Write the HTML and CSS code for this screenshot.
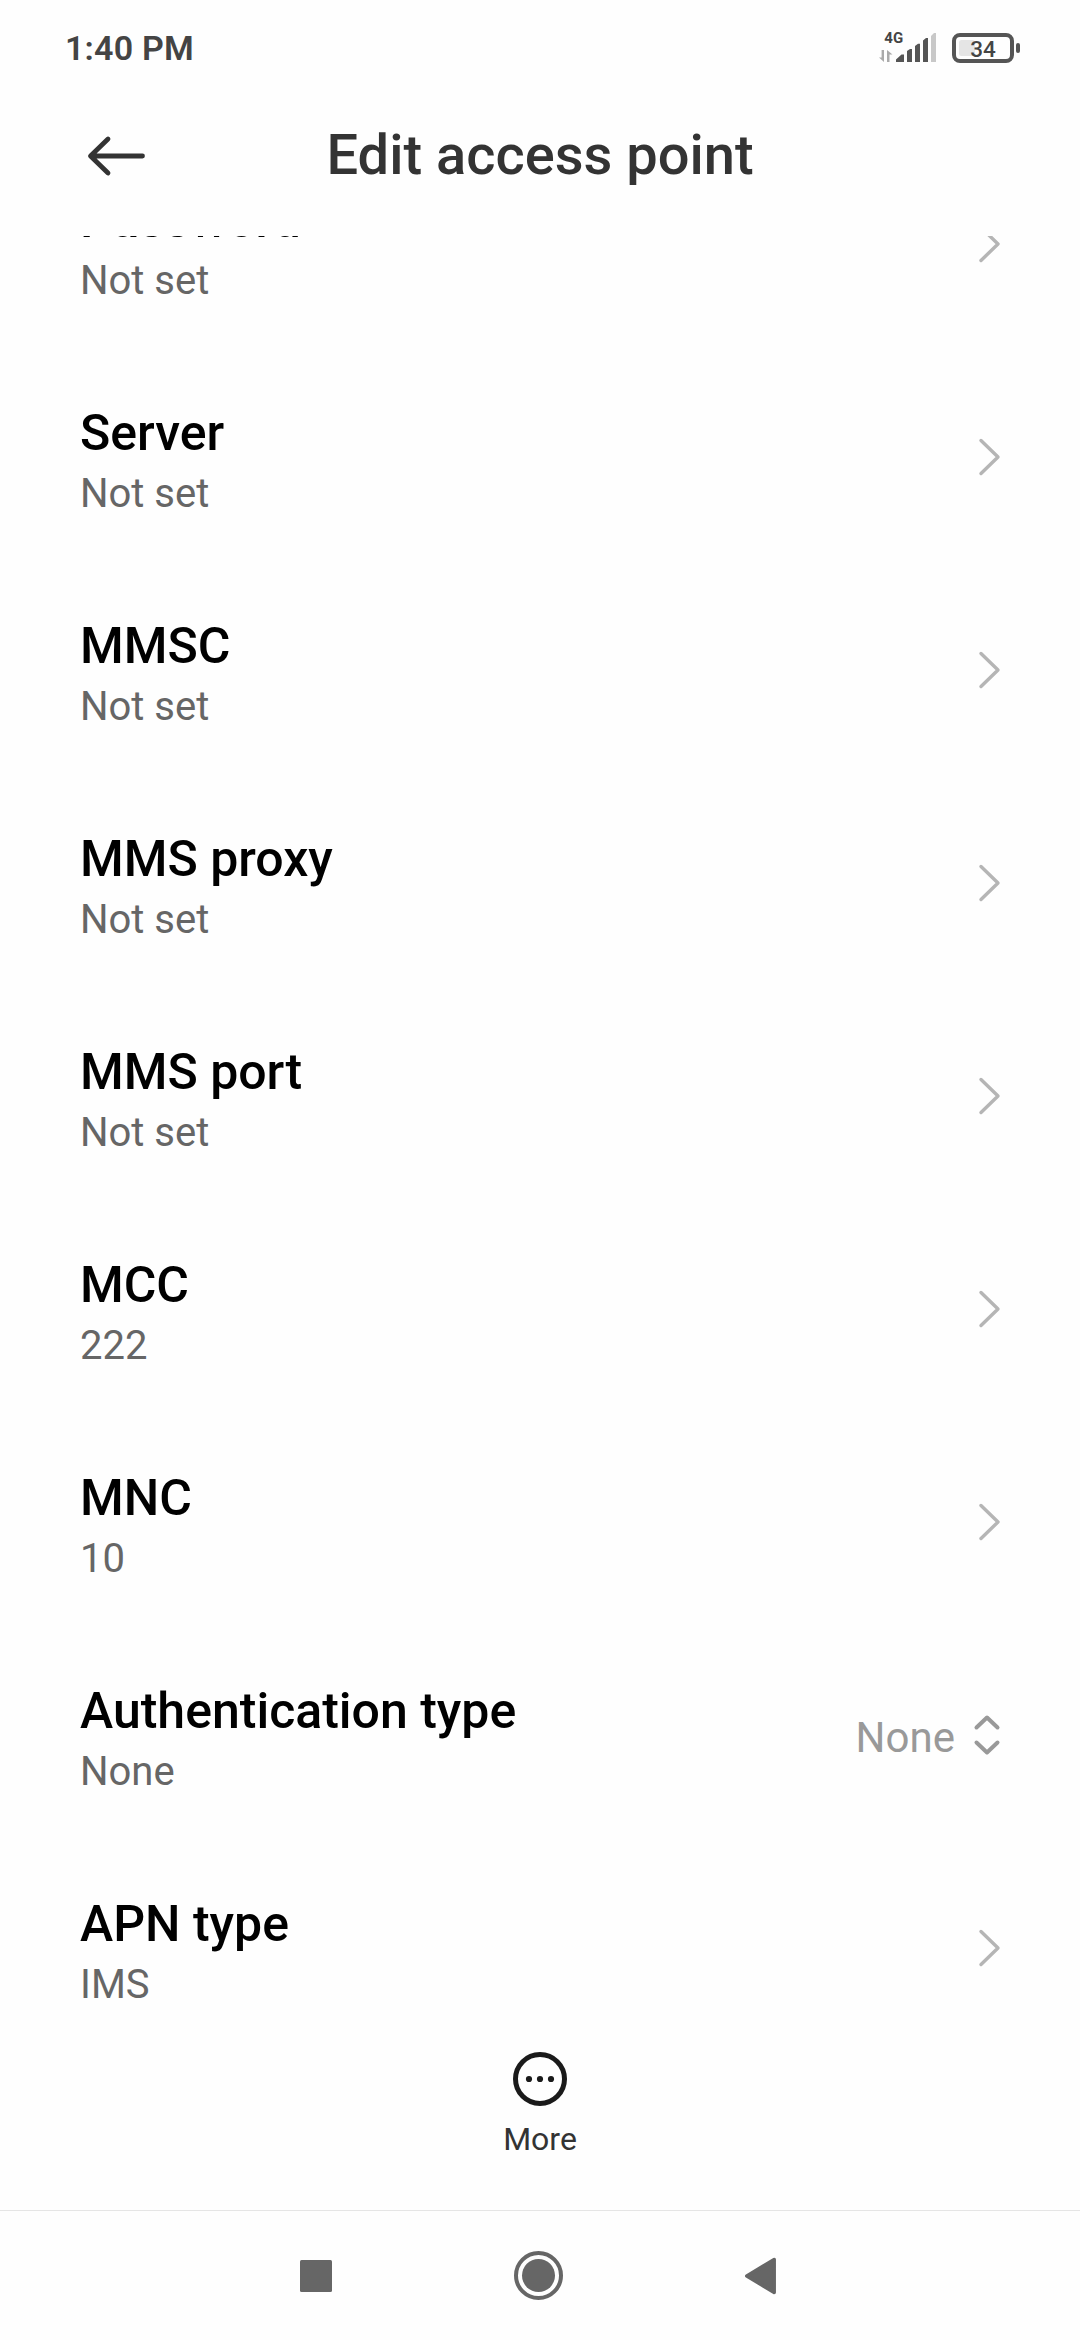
FILE: index.html
```html
<!DOCTYPE html>
<html lang="en">
<head>
    <meta charset="UTF-8">
    <meta name="viewport" content="width=device-width, initial-scale=1.0">
    <title>Edit access point</title>
    <link rel="stylesheet" href="styles.css">
</head>
<body>
    <svg class="sprite">
        <symbol id="chevron" viewBox="0 0 24 40">
            <path d="M4 3.500 L21 20 L4 36.500" fill="none" stroke="#b5b5b5" stroke-width="3.400" stroke-linecap="round" stroke-linejoin="round"/>
        </symbol>
    </svg>

    <div class="screen">
        <div class="status-bar">
            <span class="clock">1:40 PM</span>
            <svg class="status-icons" width="146" height="40" viewBox="878 28 146 40">
                <!-- signal -->
                <text class="network" x="884.3" y="42.5">4G</text>
                <path d="M879 57.5 H881.6 V50 H884 V62 Z M887 62 V50 L892.5 54.5 H889.5 V62 Z" fill="#aaa"/>
                <path d="M896 62 V59.500 L901.500 54.500 H904 V62 Z M907 62 V51 L910 49 H912 V62 Z M915 62 V46 L918 43.800 H920 V62 Z M923 62 V40.500 L926 38 H928 V62 Z" fill="#555"/>
                <path d="M931 62 V36 L934 33 H936 V62 Z" fill="#c8c8c8"/>
                <!-- battery -->
                <rect x="954" y="35" width="58" height="26" rx="6" fill="none" stroke="#555" stroke-width="4"/>
                <rect x="959" y="40" width="16" height="16" rx="2.500" fill="#e5e5e5"/>
                <rect x="1016" y="43" width="4" height="10" rx="2" fill="#555"/>
                <text class="charge" x="983" y="56.500">34</text>
            </svg>
        </div>

        <div class="header">
            <svg class="back" width="60" height="42" viewBox="0 0 60 42">
                <path d="M56.500 21 H5 M22 4 L4.500 21 L22 38" fill="none" stroke="#333" stroke-width="4.800" stroke-linecap="round" stroke-linejoin="round"/>
            </svg>
            <h1>Edit access point</h1>
        </div>

        <div class="list">
            <div class="row first">
                <div class="info"><div class="name">Password</div><div class="value">Not set</div></div>
                <svg class="chevron"><use href="#chevron"/></svg>
            </div>
            <div class="row">
                <div class="info"><div class="name">Server</div><div class="value">Not set</div></div>
                <svg class="chevron"><use href="#chevron"/></svg>
            </div>
            <div class="row">
                <div class="info"><div class="name">MMSC</div><div class="value">Not set</div></div>
                <svg class="chevron"><use href="#chevron"/></svg>
            </div>
            <div class="row">
                <div class="info"><div class="name">MMS proxy</div><div class="value">Not set</div></div>
                <svg class="chevron"><use href="#chevron"/></svg>
            </div>
            <div class="row">
                <div class="info"><div class="name">MMS port</div><div class="value">Not set</div></div>
                <svg class="chevron"><use href="#chevron"/></svg>
            </div>
            <div class="row">
                <div class="info"><div class="name">MCC</div><div class="value">222</div></div>
                <svg class="chevron"><use href="#chevron"/></svg>
            </div>
            <div class="row">
                <div class="info"><div class="name">MNC</div><div class="value">10</div></div>
                <svg class="chevron"><use href="#chevron"/></svg>
            </div>
            <div class="row">
                <div class="info"><div class="name">Authentication type</div><div class="value">None</div></div>
                <div class="picker">
                    <span>None</span>
                    <svg width="28" height="44" viewBox="0 0 28 44">
                        <path d="M3.500 14.500 L14 4.500 L24.500 14.500 M3.500 29.500 L14 39.500 L24.500 29.500" fill="none" stroke="#999" stroke-width="4" stroke-linecap="round" stroke-linejoin="round"/>
                    </svg>
                </div>
            </div>
            <div class="row">
                <div class="info"><div class="name">APN type</div><div class="value">IMS</div></div>
                <svg class="chevron"><use href="#chevron"/></svg>
            </div>
        </div>

        <div class="more">
            <svg width="54" height="54" viewBox="0 0 54 54">
                <circle cx="27" cy="27" r="24.500" fill="none" stroke="#1a1a1a" stroke-width="5"/>
                <circle cx="16" cy="27" r="3.100" fill="#1a1a1a"/>
                <circle cx="27" cy="27" r="3.100" fill="#1a1a1a"/>
                <circle cx="38" cy="27" r="3.100" fill="#1a1a1a"/>
            </svg>
            <span>More</span>
        </div>

        <div class="nav-bar">
            <svg width="32" height="32" viewBox="0 0 32 32">
                <rect width="32" height="32" rx="1.500" fill="#666"/>
            </svg>
            <svg width="49" height="49" viewBox="0 0 49 49">
                <circle cx="24.500" cy="24.500" r="22.500" fill="none" stroke="#666" stroke-width="4"/>
                <circle cx="24.500" cy="24.500" r="16.500" fill="#666"/>
            </svg>
            <svg width="31" height="38" viewBox="0 0 31 38">
                <path d="M1.800 19 L29.200 2.500 V35.500 Z" fill="#666" stroke="#666" stroke-width="3.500" stroke-linejoin="round"/>
            </svg>
        </div>
    </div>
</body>
</html>
```
FILE: styles.css
```css
* {
    box-sizing: border-box;
}

body {
    margin: 0;
    background-color: #fefefe;
    font-family: Roboto, sans-serif;
}

.sprite {
    display: none;
}

.screen {
    display: flex;
    flex-direction: column;
    width: 1080px;
    height: 2340px;
    overflow: hidden;
}

.status-bar {
    display: flex;
    justify-content: space-between;
    align-items: center;
    height: 96px;
    padding: 0 56px 0 65px;
}

.clock {
    font-size: 34px;
    font-weight: 600;
    letter-spacing: 0.2px;
    color: #444;
}

.network {
    font-size: 15px;
    font-weight: 700;
    fill: #444;
}

.charge {
    font-size: 22.5px;
    font-weight: 500;
    text-anchor: middle;
    fill: #444;
}

.header {
    display: grid;
    grid-template-columns: 100px 1fr 100px;
    align-items: center;
    height: 140px;
    padding: 0 86px 20px;
}

h1 {
    margin: 0 0 2px;
    font-size: 56px;
    font-weight: 500;
    line-height: 64px;
    text-align: center;
    color: #333;
}

.list {
    height: 1792px;
    overflow: hidden;
}

.row {
    display: flex;
    justify-content: space-between;
    align-items: center;
    height: 213px;
    padding: 0 79px 0 80px;
}

.first {
    margin-top: -98px;
}

.info {
    padding-top: 6px;
}

.name {
    font-size: 50px;
    font-weight: 500;
    line-height: 60px;
    color: #000;
}

.value {
    margin-top: 7px;
    font-size: 40px;
    line-height: 48px;
    color: #666;
}

.chevron {
    width: 24px;
    height: 40px;
    margin-bottom: 1px;
}

.picker {
    display: flex;
    align-items: center;
    gap: 18px;
    margin-bottom: 1px;
    font-size: 42px;
    color: #999;
}

.picker span {
    padding-top: 4px;
}

.more {
    display: flex;
    flex-direction: column;
    align-items: center;
    height: 182px;
    padding-top: 24px;
}

.more span {
    margin-top: 13px;
    font-size: 32px;
    line-height: 40px;
    color: #333;
}

.nav-bar {
    display: flex;
    justify-content: space-between;
    align-items: center;
    height: 130px;
    padding: 0 304px 0 300px;
    border-top: 1px solid #e5e5e5;
}
```
